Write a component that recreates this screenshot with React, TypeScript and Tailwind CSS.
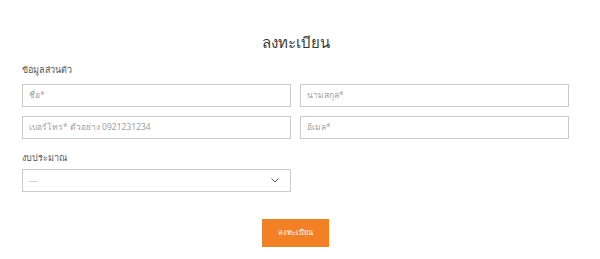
import React from "react";

export default function App() {
  const font = { fontFamily: '"Noto Sans", "Liberation Sans", sans-serif' };
  return (
    <div className="w-[600px] h-[259px] bg-white text-[#333]" style={font}>
      <div className="mx-[22px] w-[547px] pt-[30px]">
        <h1 className="text-center text-[15px] leading-[24px] font-light text-[#3a3a3a] h-[24px]">ลงทะเบียน</h1>
        <div className="mt-[10px] text-[9px] leading-[12px] text-[#555] h-[12px]">ข้อมูลส่วนตัว</div>
        <div className="mt-[8px] grid grid-cols-2 gap-x-[9px] gap-y-[9px]">
          {["ชื่อ*", "นามสกุล*", "เบอร์โทร* ตัวอย่าง 0921231234", "อีเมล*"].map((p) => (
            <div key={p} className="h-[23px] border border-[#cbcbcb] flex items-center px-[6px] text-[8.5px] text-[#a0a0a0]">
              {p}
            </div>
          ))}
        </div>
        <div className="mt-[13px] text-[9px] leading-[12px] text-[#555] h-[12px]">งบประมาณ</div>
        <div className="mt-[5px] w-[269px] h-[23px] border border-[#cbcbcb] flex items-center justify-between pl-[6px] pr-[11px] text-[9px] text-[#b0b0b0]">
          <span>---</span>
          <svg width="8" height="5" viewBox="0 0 8 5" fill="none">
            <path d="M0.5 0.5L4 4L7.5 0.5" stroke="#555" strokeWidth="1" />
          </svg>
        </div>
        <div className="mt-[27px] flex justify-center">
          <div className="w-[67px] h-[28px] bg-[#f28126] text-white text-[7.5px] flex items-center justify-center">ลงทะเบียน</div>
        </div>
      </div>
    </div>
  );
}
